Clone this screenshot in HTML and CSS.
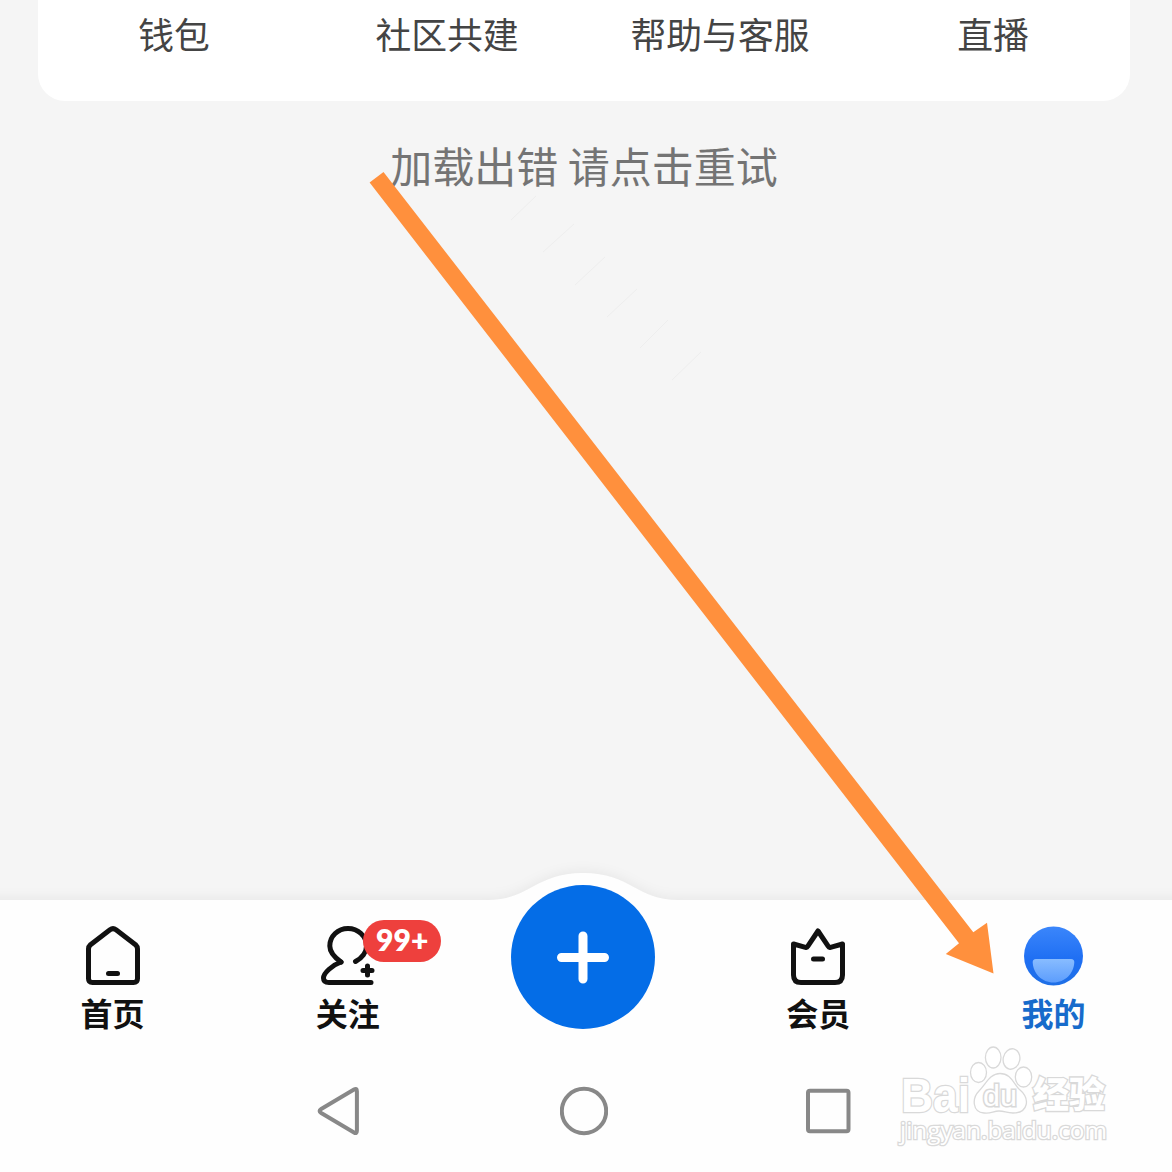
FILE: index.html
```html
<!DOCTYPE html>
<html lang="zh-CN">
<head>
<meta charset="utf-8">
<title>我的</title>
<link rel="stylesheet" href="styles.css">
</head>
<body>
<div class="screen">
  <main class="content">
    <nav class="card">
      <span>钱包</span><span>社区共建</span><span>帮助与客服</span><span>直播</span>
    </nav>
    <p class="message">加载出错 请点击重试</p>
  </main>

  <footer class="bottom">
    <svg class="bar-shape" viewBox="0 0 1172 100" aria-hidden="true">
      <path d="M-20 30H488C530 30 535 3 583 3S636 30 678 30H1192V320H-20Z"/>
    </svg>
    <nav class="tabs">
      <a class="tab">
        <svg class="icon" viewBox="0 0 66 66"><path d="M8.500 54.500V25Q8.500 22.500 10.500 20.700L30 5.700Q33 3.500 36 5.700L55.500 20.700Q57.500 22.500 57.500 25V54.500Q57.500 58.500 53.500 58.500H12.500Q8.500 58.500 8.500 54.500Z"/><path d="M28.500 49.500H37.500"/></svg>
        <span>首页</span>
      </a>
      <a class="tab">
        <svg class="icon" viewBox="0 0 66 66"><path d="M26 38C19 33 14.800 28 14.800 22C14.800 12 23 4.500 33 4.500C43 4.500 51.500 12 51.500 22C51.500 28 47 34 40.500 37.500"/><path d="M26 38C17.500 41 8.500 49 8.500 54C8.500 57 10.500 58.500 14 58.500H56"/><path d="M52.500 42V51M48 46.500H57"/></svg>
        <span>关注</span>
        <b class="badge">99+</b>
      </a>
      <a class="tab add">
        <svg class="plus" viewBox="0 0 144 144"><circle cx="72" cy="72" r="72"/><path d="M72 51V94M50.500 72.500H93.500"/></svg>
      </a>
      <a class="tab">
        <svg class="icon" viewBox="0 0 66 66"><path d="M8.500 20L20.500 23.300Q22 23.700 22.700 22.400L33 7L43.300 22.400Q44 23.700 45.500 23.300L57.500 20V51Q57.500 58.500 50 58.500H16Q8.500 58.500 8.500 51Z"/><path d="M28.500 35H37.500"/></svg>
        <span>会员</span>
      </a>
      <a class="tab active">
        <svg class="icon face" viewBox="0 0 66 66">
          <defs>
            <linearGradient id="face" x1="0" y1="0" x2="0" y2="1"><stop offset="0" stop-color="#3b86fb"/><stop offset=".55" stop-color="#1f6ff3"/><stop offset="1" stop-color="#1e6fe6"/></linearGradient>
            <linearGradient id="mouth" x1="0" y1="0" x2="0" y2="1"><stop offset="0" stop-color="#88bcff"/><stop offset="1" stop-color="#5c9dfd"/></linearGradient>
          </defs>
          <circle cx="33.500" cy="32" r="29.500" fill="url(#face)"/>
          <path d="M16 35H51Q54.500 35 54.300 38.500C53.700 49.500 45 58.500 33.500 58.500S13.300 49.500 12.700 38.500Q12.500 35 16 35Z" fill="url(#mouth)"/>
        </svg>
        <span>我的</span>
      </a>
    </nav>
    <div class="system">
      <svg viewBox="0 0 48 52"><path d="M38.400 6.200V45.800Q38.400 49.200 35.500 47.500L2.700 28Q-.5 26 2.700 24L35.500 4.500Q38.400 2.800 38.400 6.200Z" transform="translate(2.500)"/></svg>
      <svg viewBox="0 0 48 52"><circle cx="24" cy="26" r="22.200"/></svg>
      <svg viewBox="0 0 48 52"><rect x="4" y="5.800" width="40.500" height="40.500" rx="2"/></svg>
    </div>
  </footer>

  <svg class="overlay" viewBox="0 0 1172 1172">
    <g class="scratches"><path d="M511 220L536 196M543 252L574 224M575 285L605 257M607 317L637 289M640 348L668 320M672 380L701 352"/></g>
    <path class="arrow" d="M369.600 182.600L383.500 172L973.300 932.300L987 922.700L993.500 973.500L945.800 954L959 943.300Z"/>
    <g class="watermark">
      <text class="latin" x="901" y="1112" textLength="69" lengthAdjust="spacingAndGlyphs">Bai</text>
      <ellipse cx="978.500" cy="1072.500" rx="8" ry="10"/>
      <ellipse cx="993.200" cy="1057.500" rx="7.800" ry="10.500"/>
      <ellipse cx="1011.500" cy="1059" rx="8.300" ry="10.300" transform="rotate(12 1011.500 1059)"/>
      <ellipse cx="1023.500" cy="1077" rx="8.200" ry="10"/>
      <path d="M1000 1073.500C1011 1073.500 1013 1083 1019 1089C1031 1099 1028 1113 1013 1113C1006 1113 1005 1111 999 1111C993 1111 991 1114 984 1113C972 1112 972 1098 979 1091C986 1084 990 1073.500 1000 1073.500Z"/>
      <text class="du" x="983" y="1106" textLength="34" lengthAdjust="spacingAndGlyphs">du</text>
      <text class="han" x="1033" y="1108" textLength="72" lengthAdjust="spacingAndGlyphs">经验</text>
      <text class="url" x="900" y="1139" textLength="207" lengthAdjust="spacingAndGlyphs">jingyan.baidu.com</text>
    </g>
  </svg>
</div>
</body>
</html>
```
FILE: styles.css
```css
* { box-sizing: border-box; }

body {
  margin: 0;
  font-family: "Noto Sans CJK SC", sans-serif;
  background: #f5f5f5;
}

.screen {
  position: relative;
  display: flex;
  flex-direction: column;
  width: 1172px;
  height: 1172px;
  overflow: hidden;
}

.content { flex: 1; }

.card {
  display: grid;
  grid-template-columns: repeat(4, 1fr);
  width: 1092px;
  height: 101px;
  margin-left: 37.5px;
  padding-top: 7px;
  border-radius: 0 0 27px 27px;
  background: #fff;
  color: #444;
  font-size: 35.8px;
  line-height: 52px;
  text-align: center;
}

.message {
  margin: 34px 0 0;
  padding-right: 4px;
  color: #747474;
  font-size: 42px;
  line-height: 60px;
  text-align: center;
}

.bottom {
  position: relative;
  height: 272px;
  background: #fefefe;
}

.bar-shape {
  position: absolute;
  top: -30px;
  left: 0;
  width: 1172px;
  height: 100px;
  overflow: visible;
  fill: #fefefe;
  filter: drop-shadow(0 -2px 6px rgba(0, 0, 0, .055));
}

.tabs {
  position: relative;
  display: grid;
  grid-template-columns: repeat(5, 1fr);
  width: 1176px;
  height: 150px;
  margin-left: -5px;
}

.tab {
  position: relative;
  display: flex;
  flex-direction: column;
  align-items: center;
  padding-top: 24px;
  color: #111;
  font-size: 32px;
  font-weight: 700;
  line-height: 45px;
}

.tab.active { color: #176bcb; }

.icon {
  width: 66px;
  height: 66px;
  fill: none;
  stroke: #111;
  stroke-width: 5;
  stroke-linecap: round;
  stroke-linejoin: round;
}

.face { stroke: none; }

.badge {
  position: absolute;
  top: 20px;
  left: 133px;
  width: 78px;
  height: 42px;
  border-radius: 21px;
  background: #ee403d;
  color: #fff;
  font: 800 30px/39px Lato, sans-serif;
  text-align: center;
}

.tab.add {
  justify-content: center;
  padding: 0;
}

.plus {
  width: 144px;
  height: 144px;
  margin-top: -36px;
  fill: #046de7;
}

.plus path {
  stroke: #fff;
  stroke-width: 9;
  stroke-linecap: round;
}

.system {
  position: relative;
  display: flex;
  justify-content: center;
  gap: 196px;
  padding: 35px 4px 0 0;
}

.system svg {
  width: 48px;
  height: 52px;
  fill: none;
  stroke: #888;
  stroke-width: 4;
}

.overlay {
  position: absolute;
  inset: 0;
  pointer-events: none;
}

.arrow { fill: #ff903d; }

.scratches {
  fill: none;
  stroke: #eee;
  stroke-width: 1;
}

.watermark {
  fill: #fff;
  stroke: #d9d9d9;
  stroke-width: 1.3;
}

.watermark text { paint-order: stroke; stroke-width: 2.6; }

.latin { font: 700 48px "Liberation Sans", sans-serif; }

.watermark .du {
  font: 400 29px "Liberation Sans", sans-serif;
  stroke-width: 3;
}

.han { font: 900 36px "Noto Sans CJK SC", sans-serif; }

.url { font: 400 24px "Open Sans", sans-serif; }
```
